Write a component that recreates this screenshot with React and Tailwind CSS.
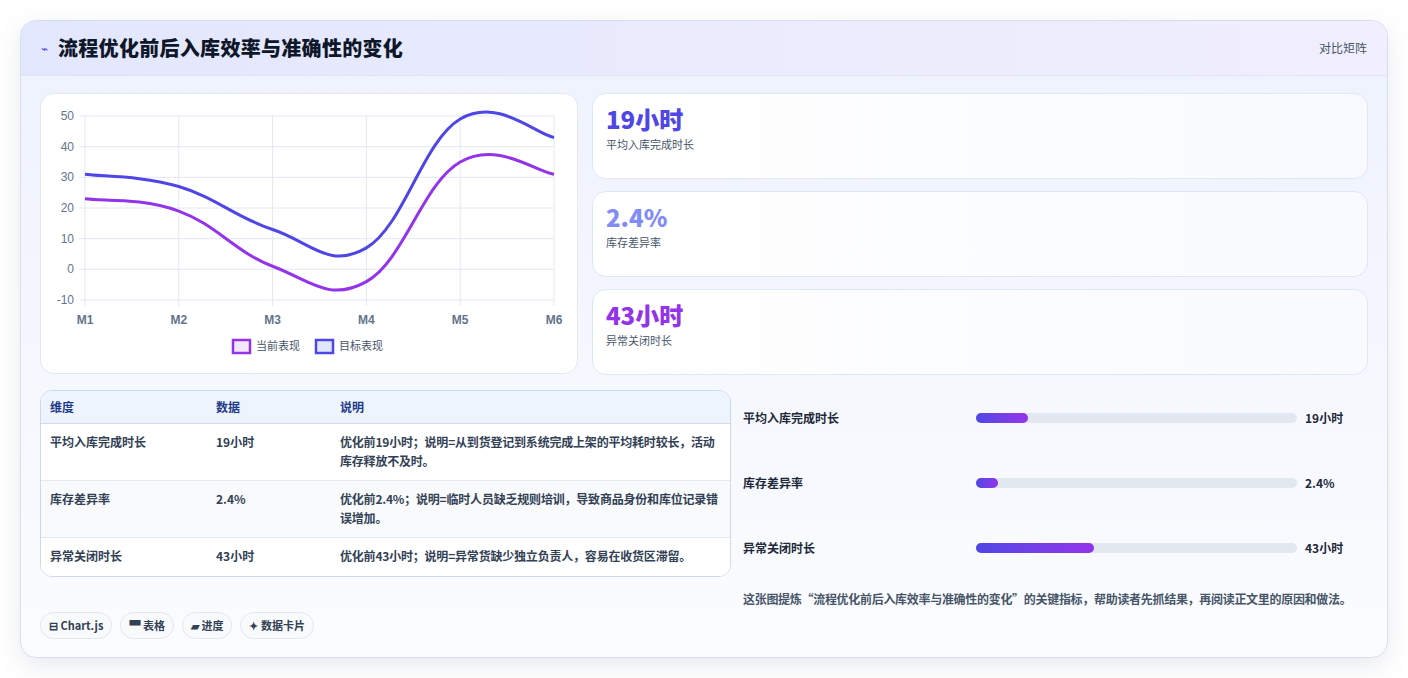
import React from "react";

const X0 = 84, X1 = 553, Y50 = 115, Ym10 = 299;
const xs = (i) => X0 + (i * (X1 - X0)) / 5;
const ys = (v) => Y50 + ((50 - v) * (Ym10 - Y50)) / 60;

function path(data) {
  const pts = data.map((v, i) => [xs(i), ys(v)]);
  let d = `M${pts[0][0]},${pts[0][1]}`;
  const t = 0.4;
  for (let i = 0; i < pts.length - 1; i++) {
    const p0 = pts[i - 1] || pts[i], p1 = pts[i], p2 = pts[i + 1], p3 = pts[i + 2] || p2;
    const c1 = [p1[0] + ((p2[0] - p0[0]) * t) / 2, p1[1] + ((p2[1] - p0[1]) * t) / 2];
    const c2 = [p2[0] - ((p3[0] - p1[0]) * t) / 2, p2[1] - ((p3[1] - p1[1]) * t) / 2];
    d += ` C${c1[0]},${c1[1]} ${c2[0]},${c2[1]} ${p2[0]},${p2[1]}`;
  }
  return d;
}

function Chart() {
  const ticks = [50, 40, 30, 20, 10, 0, -10];
  return (
    <svg width="538" height="281" viewBox="40 93 538 281" className="block">
      {ticks.map((t) => (
        <g key={t}>
          <line x1={X0 - 6} x2={X1} y1={ys(t)} y2={ys(t)} stroke="#e2e8f0" strokeWidth="1" />
          <text x={X0 - 11} y={ys(t) + 4} textAnchor="end" fontSize="12" fill="#64748b" fontFamily="Liberation Sans, sans-serif">{t}</text>
        </g>
      ))}
      {[0, 1, 2, 3, 4, 5].map((i) => (
        <g key={i}>
          <line x1={xs(i)} x2={xs(i)} y1={Y50} y2={Ym10 + 6} stroke="#e2e8f0" strokeWidth="1" />
          <text x={xs(i)} y={323} textAnchor="middle" fontSize="12" fontWeight="bold" fill="#64748b" fontFamily="Liberation Sans, sans-serif">M{i + 1}</text>
        </g>
      ))}
      <path d={path([31, 27, 13, 7, 49, 43])} fill="none" stroke="#4f46e5" strokeWidth="3" />
      <path d={path([23, 19, 1, -4, 35, 31])} fill="none" stroke="#9333ea" strokeWidth="3" />
      <rect x="232" y="339" width="17" height="13" fill="#f3e8ff" stroke="#9333ea" strokeWidth="2.5" />
      <text x="255" y="349" fontSize="11" fill="#475569" fontFamily="Noto Sans CJK SC, sans-serif">当前表现</text>
      <rect x="315" y="339" width="17" height="13" fill="#e0e7ff" stroke="#4f46e5" strokeWidth="2.5" />
      <text x="338" y="349" fontSize="11" fill="#475569" fontFamily="Noto Sans CJK SC, sans-serif">目标表现</text>
    </svg>
  );
}

const metrics = [
  ["19小时", "平均入库完成时长", "text-[#4f46e5]"],
  ["2.4%", "库存差异率", "text-[#818cf8]"],
  ["43小时", "异常关闭时长", "text-[#9333ea]"],
];
const rows = [
  ["平均入库完成时长", "19小时", "优化前19小时；说明=从到货登记到系统完成上架的平均耗时较长，活动库存释放不及时。"],
  ["库存差异率", "2.4%", "优化前2.4%；说明=临时人员缺乏规则培训，导致商品身份和库位记录错误增加。"],
  ["异常关闭时长", "43小时", "优化前43小时；说明=异常货缺少独立负责人，容易在收货区滞留。"],
];
const bars = [
  ["平均入库完成时长", "19小时", 52],
  ["库存差异率", "2.4%", 22],
  ["异常关闭时长", "43小时", 118],
];

export default function App() {
  return (
    <div className="w-[1408px] h-[678px] bg-white pt-[20px] px-[20px]" style={{ fontFamily: '"Noto Sans CJK SC", "Noto Sans", sans-serif' }}>
      <div className="h-[638px] rounded-[16px] border border-[#d6def0] shadow-[0_8px_24px_rgba(100,116,139,0.15)] overflow-hidden bg-gradient-to-b from-[#eef2fe] to-[#fbfcfe]">
        <div className="h-[55px] flex items-center justify-between px-[20px] border-b border-[#dfe5f5] bg-gradient-to-r from-[#e3e7fd] to-[#f1effd]">
          <div className="flex items-center gap-[10px]">
            <span className="text-[#4f46e5] text-[12px]">⌁</span>
            <span className="text-[20px] font-black text-[#0f172a] tracking-[0.3px]">流程优化前后入库效率与准确性的变化</span>
          </div>
          <span className="text-[12px] text-[#475569]">对比矩阵</span>
        </div>
        <div className="px-[19px] pt-[17px]">
          <div className="flex gap-[14px]">
            <div className="w-[538px] h-[281px] rounded-[14px] border border-[#e2e8f0] bg-white overflow-hidden">
              <Chart />
            </div>
            <div className="flex-1 flex flex-col gap-[12px]">
              {metrics.map(([v, l, c]) => (
                <div key={l} className="h-[86px] rounded-[14px] border border-[#dfe6f5] bg-gradient-to-r from-white to-[#f8faff] px-[13px] pt-[9px]">
                  <div className={`text-[24px] font-black leading-[32px] ${c}`}>{v}</div>
                  <div className="text-[11px] text-[#475569] mt-[1px]">{l}</div>
                </div>
              ))}
            </div>
          </div>
          <div className="flex gap-[12px] mt-[15px]">
            <div className="w-[691px]">
              <div className="rounded-[12px] border border-[#cfd8e8] overflow-hidden bg-white">
                <div className="h-[33px] flex items-center bg-[#eef4fd] border-b border-[#cfdcee] text-[12px] font-bold text-[#1e3a8a]">
                  <div className="w-[175px] pl-[9px]">维度</div>
                  <div className="w-[124px]">数据</div>
                  <div>说明</div>
                </div>
                {rows.map(([a, b, c], i) => (
                  <div key={a} className={`flex text-[12px] font-semibold text-[#334155] leading-[19px] ${i < 2 ? "h-[57px] border-b border-[#e2e8f0] pt-[8px]" : "h-[38px] pt-[8px]"} ${i % 2 ? "bg-[#f8fafc]" : "bg-white"}`}>
                    <div className="w-[175px] pl-[9px] shrink-0">{a}</div>
                    <div className="w-[124px] shrink-0">{b}</div>
                    <div className="pr-[8px] tracking-[-0.2px]">{c}</div>
                  </div>
                ))}
              </div>
              <div className="flex gap-[8px] mt-[35px] text-[11px] font-bold text-[#334155]">
                {["⊟ Chart.js", "▀ 表格", "▰ 进度", "✦ 数据卡片"].map((t) => (
                  <span key={t} className="h-[27px] flex items-center px-[8px] rounded-full border border-[#e2e8f0] bg-[#f8fafc]">{t}</span>
                ))}
              </div>
            </div>
            <div className="flex-1 pt-[18px]">
              {bars.map(([l, v, w]) => (
                <div key={l} className="h-[65px] flex items-start">
                  <div className="w-[233px] text-[12px] font-semibold text-[#1e293b] leading-[20px]">{l}</div>
                  <div className="w-[321px] h-[10px] rounded-full bg-[#e2e8f0] mt-[5px]">
                    <div className="h-full rounded-full bg-gradient-to-r from-[#4f46e5] to-[#9333ea]" style={{ width: w }} />
                  </div>
                  <div className="ml-[8px] text-[12px] font-bold text-[#1e293b] leading-[20px]">{v}</div>
                </div>
              ))}
              <div className="mt-[-14px] text-[12px] font-semibold text-[#475569] leading-[20px] tracking-[-0.3px]">
                这张图提炼“流程优化前后入库效率与准确性的变化”的关键指标，帮助读者先抓结果，再阅读正文里的原因和做法。
              </div>
            </div>
          </div>
        </div>
      </div>
    </div>
  );
}
